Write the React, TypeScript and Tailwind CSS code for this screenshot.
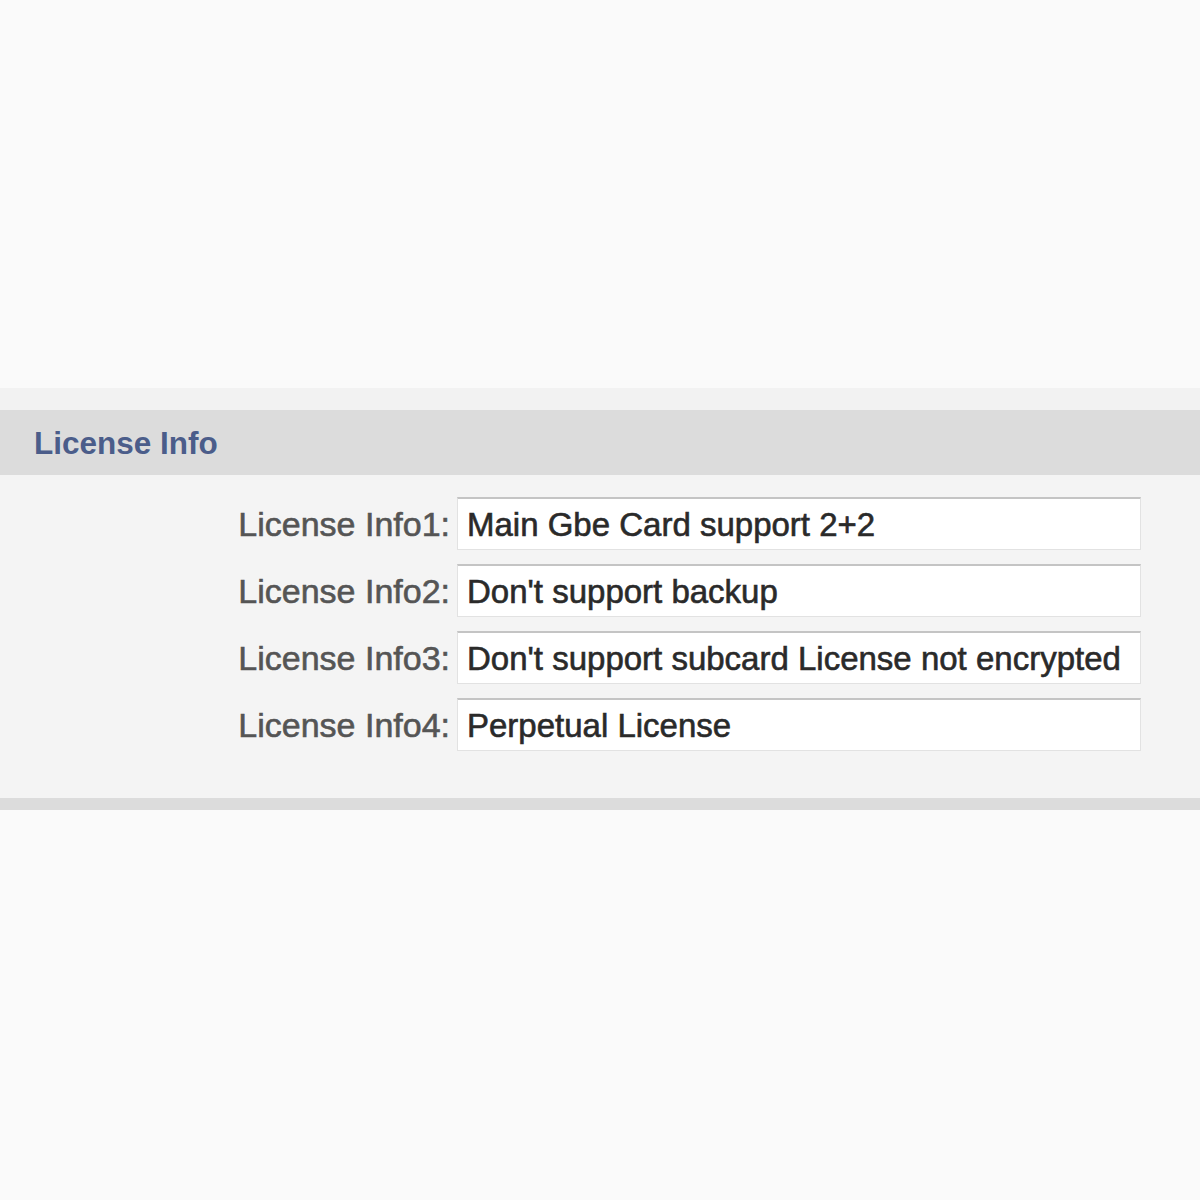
import React from "react";

const rows = [
  ["License Info1:", "Main Gbe Card support 2+2"],
  ["License Info2:", "Don't support backup"],
  ["License Info3:", "Don't support subcard License not encrypted"],
  ["License Info4:", "Perpetual License"],
];

export default function App() {
  return (
    <div
      className="w-[1200px] h-[1200px] bg-[#fafafa] flex flex-col"
      style={{ fontFamily: '"Liberation Sans", Arial, sans-serif' }}
    >
      <div className="h-[388px]" />
      <div className="h-[22px] bg-[#f2f2f2]" />
      <div className="h-[65px] bg-[#dcdcdc] flex items-center pl-[34px] pt-[3px]">
        <span className="text-[31.5px] font-bold text-[#4b5d8a]">License Info</span>
      </div>
      <div className="bg-[#f4f4f4] pt-[22px] pb-[47px] flex flex-col gap-[14px]">
        {rows.map(([label, value]) => (
          <div key={label} className="flex items-center">
            <div className="w-[450px] text-right text-[34px] text-[#555555] leading-none [-webkit-text-stroke:0.6px_#555555]">
              {label}
            </div>
            <div className="ml-[7px] w-[684px] h-[53px] bg-white border border-[#e2e2e2] border-t-[2px] border-t-[#c4c4c4] flex items-center pl-[9px] text-[33px] text-[#2a2a2a] leading-none whitespace-nowrap overflow-hidden [-webkit-text-stroke:0.6px_#2a2a2a]">
              {value}
            </div>
          </div>
        ))}
      </div>
      <div className="h-[12px] bg-[#dcdcdc]" />
    </div>
  );
}
